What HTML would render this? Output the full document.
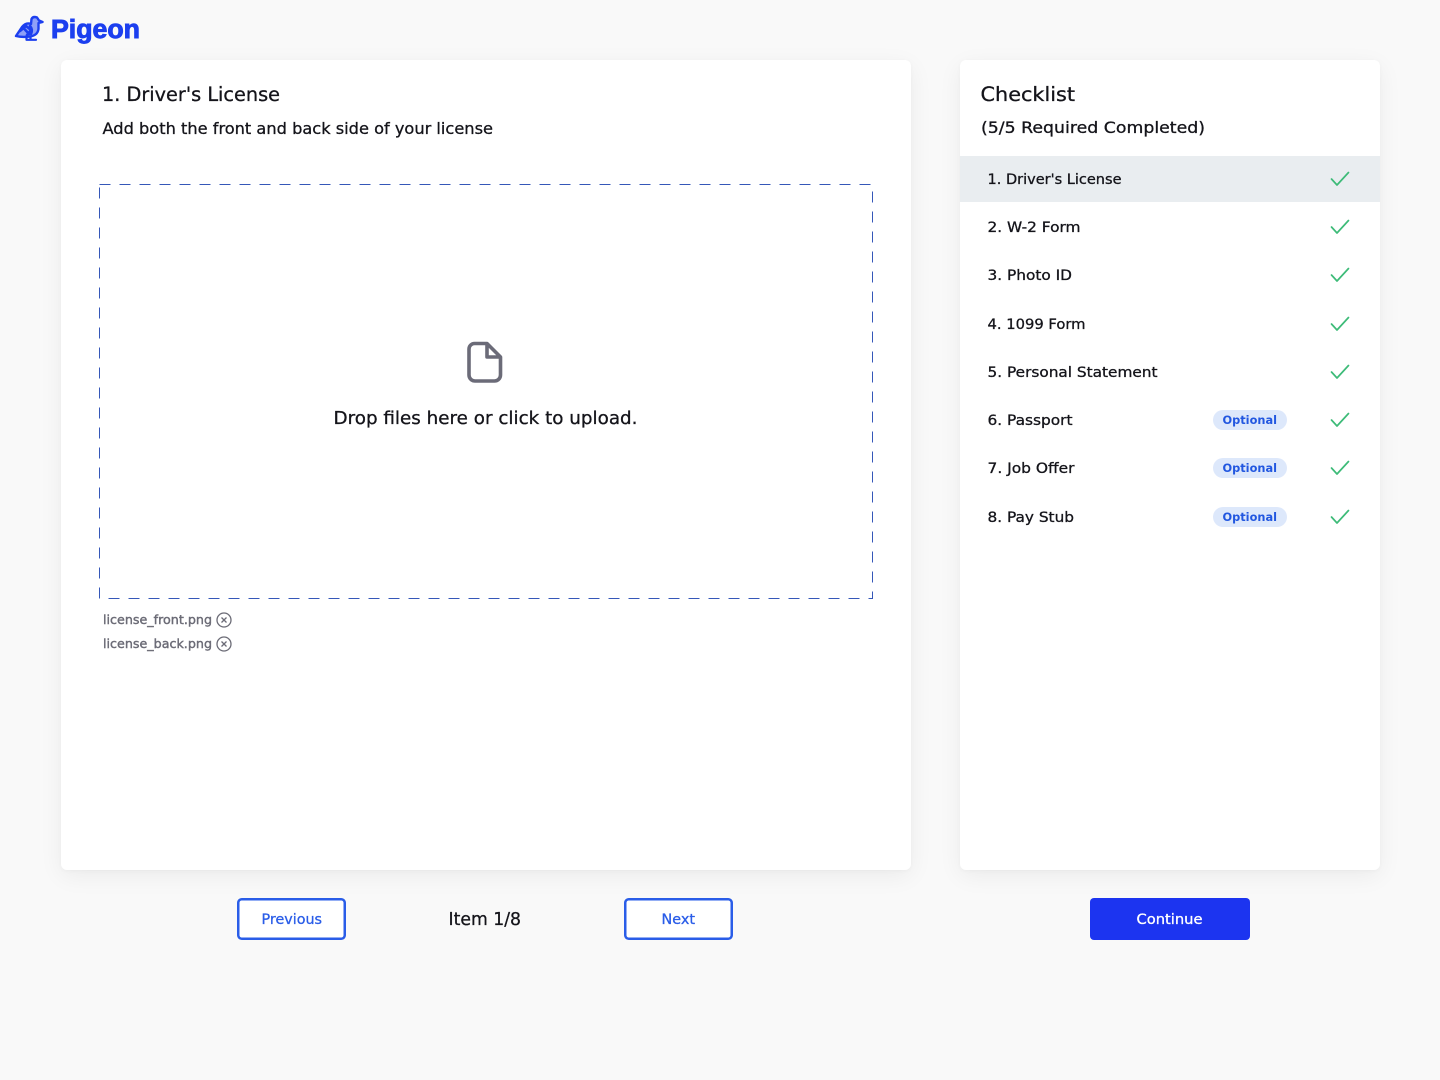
<!DOCTYPE html>
<html lang="en">
<head>
<meta charset="utf-8">
<title>Pigeon</title>
<style>
html,body{margin:0;padding:0;width:1440px;height:1080px;background:#f9f9f9;overflow:hidden}
.card{position:absolute;background:#fff;border-radius:6px;top:60px;height:810px;box-shadow:0 6px 24px rgba(0,0,0,.06),0 1px 4px rgba(0,0,0,.03)}
svg{position:absolute;left:0;top:0}
text{font-family:"DejaVu Sans","Liberation Sans",sans-serif;fill:#14141a;stroke:#14141a;stroke-width:.3px}
.h{font-size:19.5px}
.s{font-size:16px}
.l{font-size:14px}
.f{font-size:12px;fill:#6b6b76;stroke:#6b6b76;stroke-width:.4px}
.o{font-size:11.5px;font-weight:bold;fill:#2257e0;stroke:none}
.b{font-size:14px;fill:#2a5de8;stroke:#2a5de8}
</style>
</head>
<body>
<div class="card" style="left:61px;width:850px"></div>
<div class="card" style="left:960px;width:420px"></div>
<svg width="1440" height="1080" viewBox="0 0 1440 1080">
  <!-- logo -->
  <g fill="none" stroke="#1c3fef" stroke-width="2.400" stroke-linejoin="round" stroke-linecap="round">
    <path d="M16 36 L22 27 Q26 22 31 24 L31.500 19 Q33 16 37 17.500 L39 20.500 L42.500 22 L38.500 23 L38.500 29 Q37.500 35.500 30 36.500 Q22 37.500 16 36Z" fill="#8fa0f7"/>
    <path d="M20 31 L26 26 L31 30 L27 35 M23.500 28 L29 34 M30 26 Q33 29 31 34" stroke-width="2.600"/>
    <path d="M30.500 37 V39.800 H36 M26.500 37 V39.800 H31" stroke-width="2.200"/>
  </g>
  <text x="51" y="38" font-size="25.500" font-weight="bold" style="fill:#1c3fef;stroke:#1c3fef;stroke-width:.9px;font-family:'Liberation Sans',sans-serif" textLength="89" lengthAdjust="spacingAndGlyphs">Pigeon</text>

  <!-- left card -->
  <text class="h" x="102" y="101" textLength="178" lengthAdjust="spacingAndGlyphs">1. Driver's License</text>
  <text class="s" x="102.500" y="134" textLength="390.500" lengthAdjust="spacingAndGlyphs">Add both the front and back side of your license</text>
  <rect x="99.500" y="184.500" width="773" height="414" fill="none" stroke="#3557b8" stroke-width="1" stroke-dasharray="11 9"/>
  <path d="M474.500 343.500 H487 L500.500 357 V375 a6 6 0 0 1 -6 6 H475 a6 6 0 0 1 -6 -6 V349 a5.500 5.500 0 0 1 5.500 -5.500Z M487 343.500 V357 H500.500" fill="none" stroke="#6b6b78" stroke-width="3.600" stroke-linejoin="round"/>
  <text x="333.500" y="424" font-size="18" textLength="304" lengthAdjust="spacingAndGlyphs">Drop files here or click to upload.</text>

  <text class="f" x="103" y="624" textLength="109" lengthAdjust="spacingAndGlyphs">license_front.png</text>
  <text class="f" x="103" y="648" textLength="109" lengthAdjust="spacingAndGlyphs">license_back.png</text>
  <g fill="none" stroke="#6b6b76" stroke-width="1.300">
    <circle cx="224" cy="620" r="7"/><path d="M221.500 617.500 L226.500 622.500 M226.500 617.500 L221.500 622.500"/>
    <circle cx="224" cy="644" r="7"/><path d="M221.500 641.500 L226.500 646.500 M226.500 641.500 L221.500 646.500"/>
  </g>

  <!-- checklist -->
  <text class="h" x="980.500" y="101" textLength="94.500" lengthAdjust="spacingAndGlyphs">Checklist</text>
  <text class="s" x="981" y="133" textLength="224" lengthAdjust="spacingAndGlyphs">(5/5 Required Completed)</text>
  <rect x="960" y="156" width="420" height="46" fill="#e9edf0"/>
  <text class="l" x="987.500" y="184" textLength="134" lengthAdjust="spacingAndGlyphs">1. Driver's License</text>
  <text class="l" x="987.500" y="232" textLength="93" lengthAdjust="spacingAndGlyphs">2. W-2 Form</text>
  <text class="l" x="987.500" y="280" textLength="84.500" lengthAdjust="spacingAndGlyphs">3. Photo ID</text>
  <text class="l" x="987.500" y="329" textLength="98" lengthAdjust="spacingAndGlyphs">4. 1099 Form</text>
  <text class="l" x="987.500" y="377" textLength="170" lengthAdjust="spacingAndGlyphs">5. Personal Statement</text>
  <text class="l" x="987.500" y="425" textLength="85" lengthAdjust="spacingAndGlyphs">6. Passport</text>
  <text class="l" x="987.500" y="473" textLength="87" lengthAdjust="spacingAndGlyphs">7. Job Offer</text>
  <text class="l" x="987.500" y="522" textLength="86.500" lengthAdjust="spacingAndGlyphs">8. Pay Stub</text>

  <g fill="#dde8fb">
    <rect x="1213" y="410" width="74" height="20" rx="10"/>
    <rect x="1213" y="458" width="74" height="20" rx="10"/>
    <rect x="1213" y="507" width="74" height="20" rx="10"/>
  </g>
  <text class="o" x="1222.500" y="424" textLength="54.500" lengthAdjust="spacingAndGlyphs">Optional</text>
  <text class="o" x="1222.500" y="472" textLength="54.500" lengthAdjust="spacingAndGlyphs">Optional</text>
  <text class="o" x="1222.500" y="521" textLength="54.500" lengthAdjust="spacingAndGlyphs">Optional</text>

  <g fill="none" stroke="#3dbb78" stroke-width="1.700" stroke-linecap="round" stroke-linejoin="round">
    <path d="M1331.500 179 L1337 185 L1348.500 172.500"/>
    <path d="M1331.500 227 L1337 233 L1348.500 220.500"/>
    <path d="M1331.500 275 L1337 281 L1348.500 268.500"/>
    <path d="M1331.500 324 L1337 330 L1348.500 317.500"/>
    <path d="M1331.500 372 L1337 378 L1348.500 365.500"/>
    <path d="M1331.500 420 L1337 426 L1348.500 413.500"/>
    <path d="M1331.500 468 L1337 474 L1348.500 461.500"/>
    <path d="M1331.500 517 L1337 523 L1348.500 510.500"/>
  </g>

  <!-- footer controls -->
  <rect x="238.250" y="899.250" width="106.500" height="39.500" rx="3.500" fill="#fff" stroke="#2a5de8" stroke-width="2.500"/>
  <rect x="625.250" y="899.250" width="106.500" height="39.500" rx="3.500" fill="#fff" stroke="#2a5de8" stroke-width="2.500"/>
  <rect x="1090" y="898" width="160" height="42" rx="4" fill="#1c34f0"/>
  <text class="b" x="261.500" y="924" textLength="60.500" lengthAdjust="spacingAndGlyphs">Previous</text>
  <text x="448.500" y="925" font-size="18" textLength="72.500" lengthAdjust="spacingAndGlyphs">Item 1/8</text>
  <text class="b" x="661.500" y="924" textLength="33.500" lengthAdjust="spacingAndGlyphs">Next</text>
  <text x="1136.500" y="924" font-size="14" style="fill:#fff;stroke:#fff" textLength="66" lengthAdjust="spacingAndGlyphs">Continue</text>
</svg>
</body>
</html>
